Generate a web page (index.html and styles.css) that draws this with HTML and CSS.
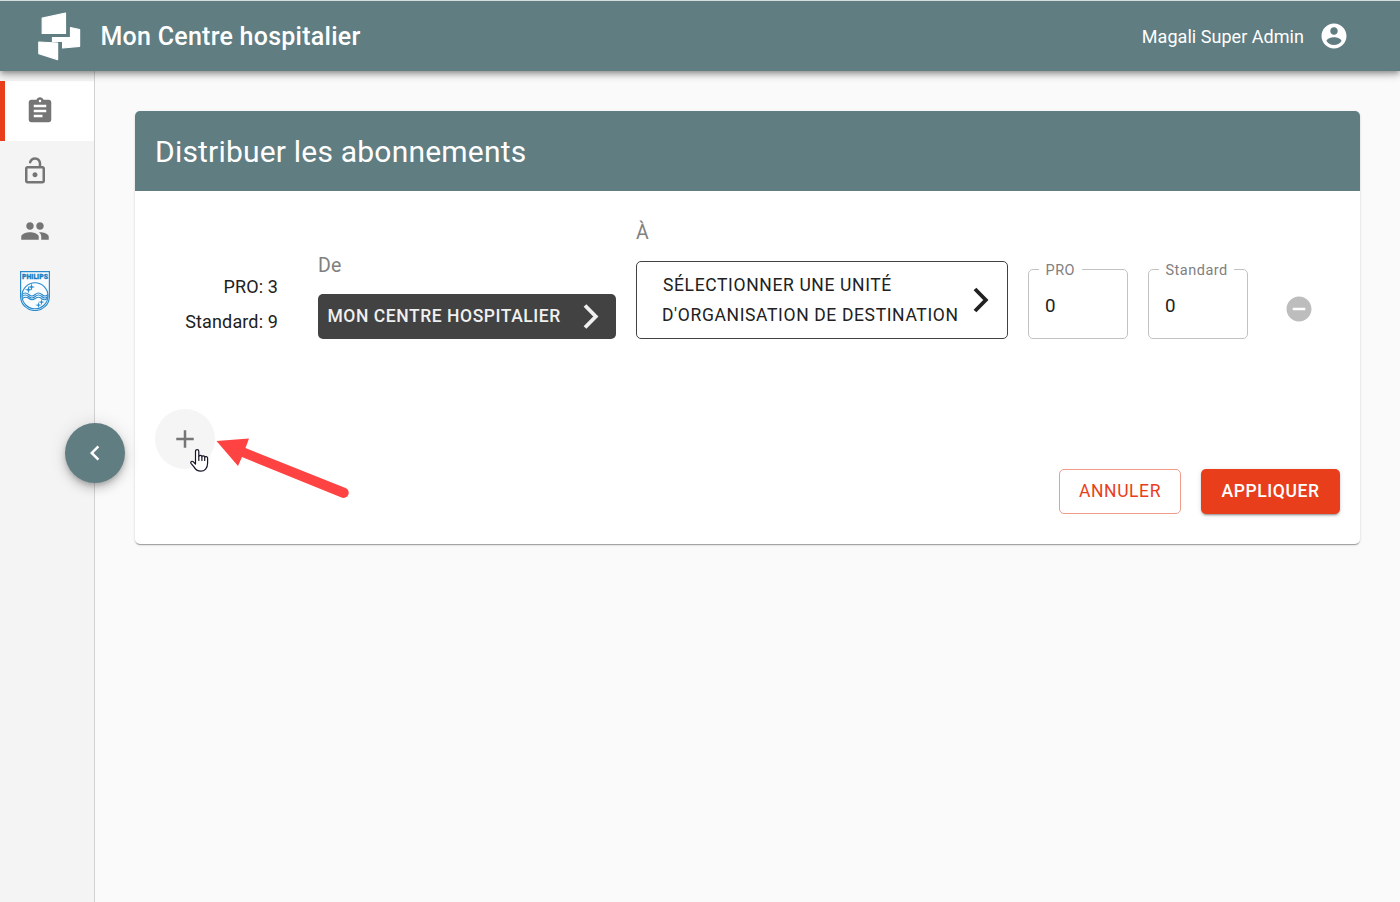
FILE: index.html
```html
<!DOCTYPE html>
<html lang="fr">
<head>
<meta charset="utf-8">
<title>Distribuer les abonnements</title>
<link rel="stylesheet" href="styles.css">
</head>
<body>
<header class="topbar">
  <svg class="logo" width="60" height="62" viewBox="0 0 60 62" fill="#fff" stroke="#fff" stroke-width="1.2" stroke-linejoin="round">
    <path d="M12.2 13.2 35.5 8v20.5H12.2z"/><path d="M40.5 22.5 49.6 24.5v16.8L32.6 43v-6.600H22.500v-3.800h18z"/><path d="M8.800 37 27.600 38V54.600L8.800 48.600z"/>
  </svg>
  <span class="brand">Mon Centre hospitalier</span>
  <span class="user">Magali Super Admin</span>
  <svg class="avatar" viewBox="0 0 24 24" fill="#fff"><path d="M12 2C6.480 2 2 6.480 2 12s4.480 10 10 10 10-4.480 10-10S17.520 2 12 2zm0 3c1.660 0 3 1.340 3 3s-1.340 3-3 3-3-1.340-3-3 1.340-3 3-3zm0 14.200c-2.500 0-4.710-1.280-6-3.220.03-1.990 4-3.080 6-3.080 1.990 0 5.970 1.090 6 3.080-1.290 1.940-3.500 3.220-6 3.220z"/></svg>
</header>
<div class="layout">
  <nav class="sidebar">
    <a class="nav-item active"><svg class="icon" viewBox="0 0 24 24"><path d="M19 3h-4.180C14.400 1.840 13.300 1 12 1c-1.300 0-2.400.84-2.820 2H5c-1.100 0-2 .9-2 2v14c0 1.100.9 2 2 2h14c1.100 0 2-.9 2-2V5c0-1.100-.9-2-2-2zm-7 0c.55 0 1 .45 1 1s-.45 1-1 1-1-.45-1-1 .45-1 1-1zm2 14H7v-2h7v2zm3-4H7v-2h10v2zm0-4H7V7h10v2z"/></svg></a>
    <a class="nav-item"><svg class="icon" viewBox="0 0 24 24"><path d="M12 17c1.100 0 2-.9 2-2s-.9-2-2-2-2 .9-2 2 .9 2 2 2zm6-9h-1V6c0-2.760-2.240-5-5-5-2.280 0-4.270 1.540-4.840 3.750-.14.540.18 1.080.72 1.220.53.140 1.080-.18 1.220-.72C9.440 3.930 10.630 3 12 3c1.650 0 3 1.350 3 3v2H6c-1.100 0-2 .9-2 2v10c0 1.100.9 2 2 2h12c1.100 0 2-.9 2-2V10c0-1.100-.9-2-2-2zm0 12H6V10h12v10z"/></svg></a>
    <a class="nav-item"><svg class="icon" viewBox="0 0 24 24"><path d="M16 11c1.660 0 2.990-1.340 2.990-3S17.660 5 16 5c-1.660 0-3 1.340-3 3s1.340 3 3 3zm-8 0c1.660 0 2.990-1.340 2.990-3S9.660 5 8 5C6.340 5 5 6.340 5 8s1.340 3 3 3zm0 2c-2.330 0-7 1.170-7 3.500V19h14v-2.500c0-2.330-4.670-3.500-7-3.500zm8 0c-.29 0-.62.020-.97.050 1.160.84 1.970 1.970 1.970 3.450V19h6v-2.500c0-2.330-4.670-3.500-7-3.500z"/></svg></a>
    <a class="nav-item"><svg class="shield" viewBox="0 0 30 40" fill="none" stroke="#2a8acb">
      <path d="M.6.6h28.800V25.500a14.400 14 0 0 1-28.800 0z" fill="#f9fcfe" stroke-width="1.200"/>
      <text class="shield-text" x="15" y="8.300" text-anchor="middle" textLength="26" lengthAdjust="spacingAndGlyphs">PHILIPS</text>
      <circle cx="15" cy="24.800" r="13" stroke-width="1.100"/>
      <path d="M2 23.500q3.300-3 6.600 0t6.600 0 6.600 0 6.200 0M2 25.500q3.300-3 6.600 0t6.600 0 6.600 0 6.200 0M2.500 27.500q3.300-2.500 6.400 0t6.400 0 6.200 0 6-.2" stroke-width="1.100"/>
      <g fill="#2a8acb" stroke="none"><path d="m11.500 12.500.8 2.700 2.700.8-2.700.8-.8 2.700-.8-2.700-2.700-.8 2.700-.8z"/><path d="m8.500 15 .8 3 3 .8-3 .8-.8 2.900-.8-2.900-3-.8 3-.8z"/><path d="m21.500 28 .7 2.400 2.600.7-2.600.7-.7 2.500-.7-2.500-2.600-.7 2.600-.7z"/><path d="m18.500 31 .7 2.400 2.600.7-2.600.7-.7 2.200-.7-2.200-2.600-.7 2.600-.7z"/></g>
    </svg></a>
    <button class="collapse" aria-label="Réduire"><svg viewBox="0 0 24 24" fill="#fff"><path d="M15.410 7.410 14 6l-6 6 6 6 1.410-1.410L10.830 12z"/></svg></button>
  </nav>
  <main class="content">
    <section class="card">
      <h1 class="card-title">Distribuer les abonnements</h1>
      <div class="card-body">
        <div class="row">
          <div class="stats"><span>PRO: 3</span><span>Standard: 9</span></div>
          <div class="group source">
            <span class="caption">De</span>
            <button class="btn from"><span>MON CENTRE HOSPITALIER</span><svg class="chevron" viewBox="0 0 16 26" fill="none" stroke="currentColor" stroke-width="3.800"><path d="m2 1.500 10.800 11L2 23.500"/></svg></button>
          </div>
          <div class="group target">
            <span class="caption">À</span>
            <button class="btn to"><span class="to-label"><span class="first-line">SÉLECTIONNER UNE UNITÉ</span><span>D'ORGANISATION DE DESTINATION</span></span><svg class="chevron" viewBox="0 0 16 26" fill="none" stroke="currentColor" stroke-width="3.800"><path d="m2 2 10.800 11L2 24"/></svg></button>
          </div>
          <fieldset class="field"><legend>PRO</legend><span>0</span></fieldset>
          <fieldset class="field"><legend>Standard</legend><span>0</span></fieldset>
          <svg class="remove" viewBox="0 0 24 24" fill="#bdbdbd"><path d="M12 2C6.480 2 2 6.480 2 12s4.480 10 10 10 10-4.480 10-10S17.520 2 12 2zm5 11H7v-2h10v2z"/></svg>
        </div>
        <button class="add" aria-label="Ajouter"><svg class="icon" viewBox="0 0 24 24"><path d="M19 13h-6v6h-2v-6H5v-2h6V5h2v6h6v2z"/></svg></button>
        <div class="actions"><button class="btn cancel">ANNULER</button><button class="btn apply">APPLIQUER</button></div>
      </div>
    </section>
  </main>
</div>
<svg class="annotation" width="170" height="80" viewBox="0 0 170 80">
  <path d="m6.500 11 32.500-2.500-3.500 9.500 100 40a5.200 5.200 0 0 1-4 9.600L32 27l-4 9z" fill="#ff4242"/>
</svg>
<svg class="cursor" width="20" height="26" viewBox="0 0 20 26" fill="#fff" stroke="#161628" stroke-width="1.200" stroke-linejoin="round" stroke-linecap="round"><path d="M5.500 14.500V3.400c0-2.500 3.300-2.500 3.300 0V8.500c.2-1.500 3-1.400 3.100.2.300-1.200 2.700-1.100 2.800.5.400-1 2.900-.9 2.900.9v5c0 5.200-2.900 8-6.800 8-3.200 0-5.200-1.200-6.800-4.200L1 15.300c-.8-1.700 1-2.700 2.300-1.500L5.500 16z"/><path d="M8.800 8.500v4M11.900 9v3.500M14.700 9.500v3" fill="none"/></svg>
</body>
</html>
```
FILE: styles.css
```css
* { box-sizing: border-box; }
body {
  margin: 0;
  height: 902px;
  overflow: hidden;
  display: flex;
  flex-direction: column;
  background: #fafafa;
  color: #212121;
  font: 400 17.500px/25px Roboto, sans-serif;
  letter-spacing: .01071em;
}
button { margin: 0; border: 0; padding: 0; font: inherit; letter-spacing: inherit; color: inherit; }
svg { display: block; flex: none; }
.topbar {
  position: relative;
  z-index: 2;
  height: 71px;
  flex: none;
  display: flex;
  align-items: center;
  padding: 0 51px 1px 30px;
  border-top: 1px solid #d5dcdd;
  background: #607d82;
  color: #fff;
  box-shadow: 0 2px 5px -1px rgba(0,0,0,.3), 0 5px 6px rgba(0,0,0,.16), 0 1px 12px rgba(0,0,0,.12);
}
.logo { margin-right: 10.500px; }
.brand { padding-top: 2px; font-size: 25px; font-weight: 500; letter-spacing: .25px; }
.user { margin-left: auto; padding-top: 2px; font-size: 18px; letter-spacing: .04px; }
.avatar { width: 30px; height: 30px; margin-left: 15px; }
.layout { flex: 1; display: flex; min-height: 0; }
.sidebar {
  position: relative;
  width: 95px;
  flex: none;
  padding-top: 10px;
  background: #f4f4f4;
  border-right: 1px solid #d2d2d2;
}
.nav-item { display: flex; align-items: center; height: 60px; padding-left: 20px; }
.nav-item.active { border-left: 5px solid #e83e1b; background: #fff; }
.icon { width: 30px; height: 30px; fill: #757575; }
.shield { width: 30px; height: 40px; }
.shield-text { font: 900 7px Roboto, sans-serif; letter-spacing: 0; fill: #1c7fc2; stroke: #1c7fc2; stroke-width: .3px; }
.collapse {
  position: absolute;
  top: 352px;
  right: -31px;
  width: 60px;
  height: 60px;
  border-radius: 50%;
  display: grid;
  place-items: center;
  background: #607d82;
  box-shadow: 0 3px 5px -1px rgba(0,0,0,.2), 0 6px 10px rgba(0,0,0,.14), 0 1px 18px rgba(0,0,0,.12);
}
.collapse svg { width: 30px; height: 30px; }
.content { flex: 1; padding: 40px 40px 0; }
.card {
  height: 433px;
  border-radius: 5px;
  background: #fff;
  box-shadow: 0 2px 1px -1px rgba(0,0,0,.2), 0 1px 1px rgba(0,0,0,.14), 0 1px 3px rgba(0,0,0,.12);
}
.card-title {
  margin: 0;
  padding: 1px 20px 0;
  border-radius: 5px 5px 0 0;
  background: #607d82;
  color: #fff;
  font-size: 30px;
  font-weight: 400;
  line-height: 79px;
  letter-spacing: .2px;
}
.card-body { padding: 0 20px; }
.row { display: flex; align-items: flex-end; height: 148px; gap: 20px; }
.stats { display: flex; flex-direction: column; gap: 10px; width: 123px; margin-right: 20px; padding-bottom: 5px; text-align: right; font-size: 18px; letter-spacing: .13px; }
.group { display: flex; flex-direction: column; }
.source { width: 298px; }
.target { width: 372px; }
.caption { margin-bottom: 16px; font-size: 19.500px; line-height: 24px; color: #808080; }
.btn { display: flex; align-items: center; border-radius: 5px; font-weight: 500; letter-spacing: .02857em; }
.from { height: 45px; padding: 0 17px 0 9.500px; justify-content: space-between; background: #424242; color: #f0f0f0; letter-spacing: .55px; }
.to { height: 78px; padding: 0 18px 0 25px; justify-content: space-between; border: 1px solid #424242; background: #fff; }
.to-label { display: flex; flex-direction: column; line-height: 30px; text-align: left; font-weight: 400; letter-spacing: .635px; }
.first-line { padding-left: 1px; }
.chevron { width: 16px; height: 26px; }
.field { width: 100px; height: 78px; min-width: 0; margin: 0; padding: 0 0 0 10px; border: 1px solid #c2c2c2; border-radius: 5px; }
.field legend { padding: 2px 6.500px 0; font-size: 14.500px; line-height: 15px; letter-spacing: .5px; color: #808080; }
.field span { display: block; margin: 16px 0 0 6px; font-size: 18.750px; }
.remove { width: 30px; height: 30px; margin: 0 0 15px 16px; }
.add { display: grid; place-items: center; width: 60px; height: 60px; margin-top: 70px; border-radius: 50%; background: #f5f5f5; }
.actions { display: flex; justify-content: flex-end; gap: 20px; }
.actions .btn { height: 45px; justify-content: center; }
.cancel { width: 122px; border: 1px solid #f39b8a; background: #fff; color: #e83e1b; }
.actions .cancel { font-weight: 400; letter-spacing: .6px; }
.apply { width: 139px; background: #e83e1b; color: #fff; box-shadow: 0 3px 1px -2px rgba(0,0,0,.2), 0 2px 2px rgba(0,0,0,.14), 0 1px 5px rgba(0,0,0,.12); }
.actions .apply { letter-spacing: .6px; }
.annotation { position: absolute; left: 210px; top: 430px; }
.cursor { position: absolute; left: 190px; top: 448px; }
```
